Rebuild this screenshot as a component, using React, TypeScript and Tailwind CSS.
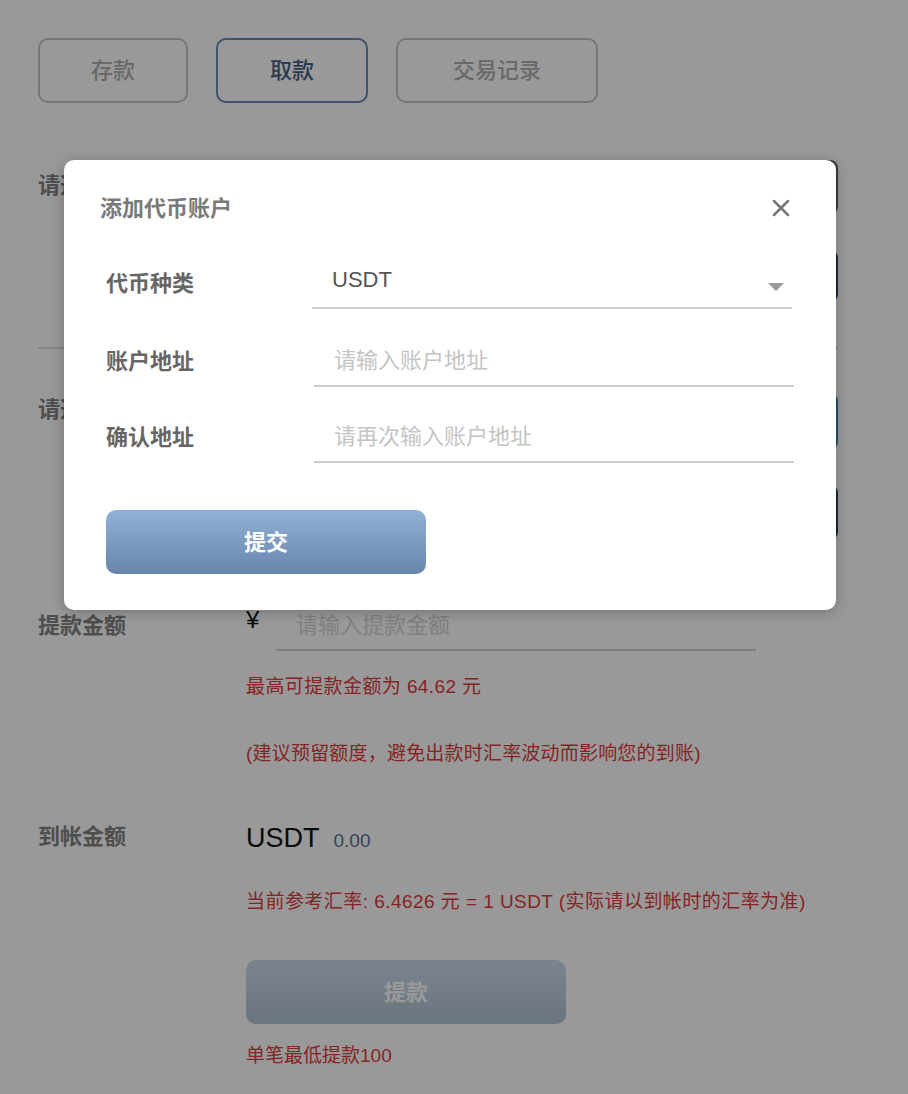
import { X } from "lucide-react";

const font = { fontFamily: '"Liberation Sans", "Noto Sans CJK SC", sans-serif' };

function Tab({ label, active, width }: { label: string; active?: boolean; width: string }) {
  return (
    <button
      className={`h-[65px] ${width} rounded-[10px] border-2 text-[22px] font-medium ${
        active ? "border-[#6688bb] text-[#4a5f85]" : "border-[#c6c6c6] text-[#b0b0b0]"
      }`}
    >
      {label}
    </button>
  );
}

function ModalRow({ label, children }: { label: string; children: React.ReactNode }) {
  return (
    <div className="flex items-center">
      <div className="w-[206px] text-[22px] font-semibold text-[#666]">{label}</div>
      {children}
    </div>
  );
}

export default function App() {
  return (
    <div className="relative min-h-[1094px] bg-white" style={font}>
      {/* page behind the overlay */}
      <div className="px-[38px] pt-[38px] pb-[30px]">
        <div className="flex gap-[28px]">
          <Tab label="存款" width="w-[150px]" />
          <Tab label="取款" width="w-[152px]" active />
          <Tab label="交易记录" width="w-[202px]" />
        </div>

        {/* bank card section */}
        <div className="mt-[57px] flex">
          <div className="w-[208px] pt-[9px] text-[22px] font-semibold text-[#838383]">请选择银行卡</div>
          <div className="w-[592px]">
            <div className="h-[55px] rounded-[8px] border-2 border-[#666]" />
            <div className="mt-[35px] h-[52px] rounded-[8px] border-2 border-[#2c3f5c]" />
          </div>
        </div>
        <div className="mt-[45px] w-[800px] border-t-2 border-[#dddddd]" />

        {/* token account section */}
        <div className="mt-[44px] flex">
          <div className="w-[208px] pt-0 text-[22px] font-semibold text-[#838383]">请选择代币账户</div>
          <div className="w-[592px]">
            <div className="h-[57px] rounded-[8px] border-2 border-[#3f86a6]" />
            <div className="mt-[35px] h-[55px] rounded-[8px] border-2 border-[#2c3f5c]" />
          </div>
        </div>

        {/* amount */}
        <div className="mt-[61px] flex">
          <div className="w-[208px] pt-[8px] text-[22px] font-semibold text-[#838383]">提款金额</div>
          <div>
            <div className="flex">
              <span className="w-[30px] pt-[1px] text-[24px] text-[#111]">¥</span>
              <div className="flex h-[50px] w-[480px] items-center border-b-2 border-[#d0d0d0] pl-[20px] text-[22px] text-[#d6d6d6]">
                请输入提款金额
              </div>
            </div>
            <div className="mt-[22px] text-[19px] leading-[28px] tracking-[0.4px] text-[#e03c3c]">
              最高可提款金额为 64.62 元
            </div>
            <div className="mt-[39px] text-[19px] leading-[28px] tracking-[0.2px] text-[#e03c3c]">
              (建议预留额度，避免出款时汇率波动而影响您的到账)
            </div>
          </div>
        </div>

        <div className="mt-[48px] flex">
          <div className="w-[208px] flex h-[40px] items-center text-[22px] font-semibold text-[#838383]">到帐金额</div>
          <div>
            <div className="flex h-[40px] items-end gap-[14px]">
              <span className="text-[27px] leading-[36px] text-[#111]">USDT</span>
              <span className="text-[19px] leading-[30px] text-[#5a739c]">0.00</span>
            </div>
            <div className="mt-[32px] text-[19px] leading-[28px] tracking-[0.45px] text-[#e03c3c]">
              当前参考汇率: 6.4626 元 = 1 USDT (实际请以到帐时的汇率为准)
            </div>
            <button className="mt-[44px] h-[64px] w-[320px] rounded-[10px] bg-gradient-to-b from-[#cddced] to-[#b2c3d5] text-[22px] font-semibold text-white">
              提款
            </button>
            <div className="mt-[18px] text-[19px] leading-[28px] text-[#e03c3c]">单笔最低提款100</div>
          </div>
        </div>
      </div>

      {/* overlay + modal */}
      <div className="absolute inset-0 bg-black/40">
        <div className="ml-[64px] mt-[160px] w-[772px] rounded-[10px] bg-white px-[36px] pt-[33px] pb-[36px] shadow-[0_2px_14px_rgba(0,0,0,0.25)]">
          <div className="flex h-[30px] items-center justify-between">
            <span className="text-[22px] font-semibold text-[#7a7a7a]">添加代币账户</span>
            <X className="mr-[5px] h-[28px] w-[28px] text-[#777]" strokeWidth={2.2} />
          </div>

          <div className="mt-[34px] pl-[6px]">
            <ModalRow label="代币种类">
              <div className="flex h-[52px] w-[480px] items-center justify-between border-b-2 border-[#cccccc] pb-[5px] pl-[20px] pr-[8px]">
                <span className="text-[22px] text-[#555]">USDT</span>
                <svg width="16" height="8" viewBox="0 0 16 8" className="mt-[14px]">
                  <path d="M0 0 H16 L8 8 Z" fill="#999" />
                </svg>
              </div>
            </ModalRow>
            <div className="mt-[26px]">
              <ModalRow label="账户地址">
                <div className="ml-[2px] flex h-[52px] w-[480px] items-center border-b-2 border-[#cccccc] pl-[20px] text-[22px] text-[#c4c4c4]">
                  请输入账户地址
                </div>
              </ModalRow>
            </div>
            <div className="mt-[24px]">
              <ModalRow label="确认地址">
                <div className="ml-[2px] flex h-[52px] w-[480px] items-center border-b-2 border-[#cccccc] pl-[20px] text-[22px] text-[#c4c4c4]">
                  请再次输入账户地址
                </div>
              </ModalRow>
            </div>

            <button className="mt-[47px] h-[64px] w-[320px] rounded-[10px] bg-gradient-to-b from-[#91b1d6] to-[#6886aa] text-[22px] font-bold text-white">
              提交
            </button>
          </div>
        </div>
      </div>
    </div>
  );
}
